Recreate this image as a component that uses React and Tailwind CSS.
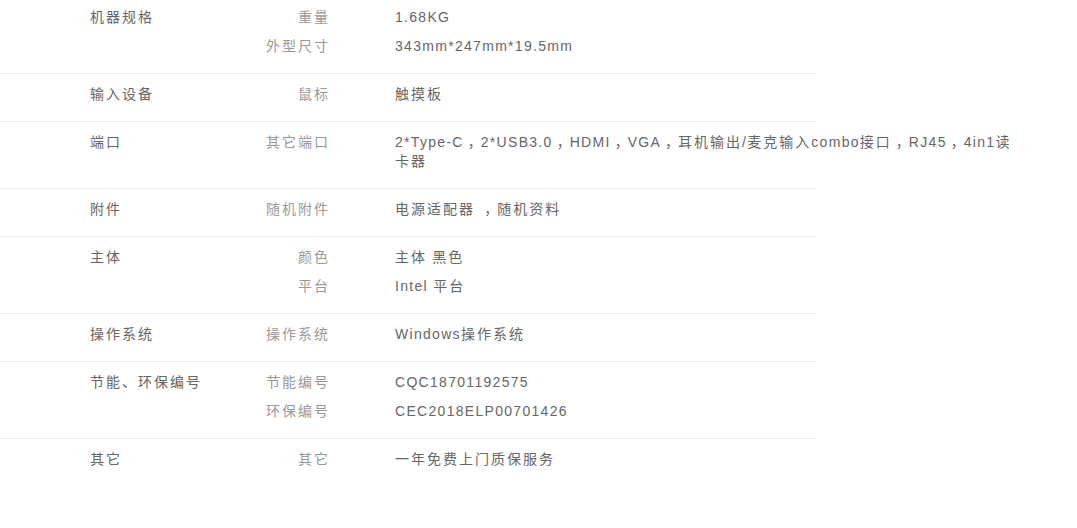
const data = [
  { title: "机器规格", items: [["重量", "1.68KG"], ["外型尺寸", "343mm*247mm*19.5mm"]] },
  { title: "输入设备", items: [["鼠标", "触摸板"]] },
  { title: "端口", items: [["其它端口", "2*Type-C，2*USB3.0，HDMI，VGA，耳机输出/麦克输入combo接口，RJ45，4in1读卡器"]] },
  { title: "附件", items: [["随机附件", "电源适配器 ，随机资料"]] },
  { title: "主体", items: [["颜色", "主体 黑色"], ["平台", "Intel 平台"]] },
  { title: "操作系统", items: [["操作系统", "Windows操作系统"]] },
  { title: "节能、环保编号", items: [["节能编号", "CQC18701192575"], ["环保编号", "CEC2018ELP00701426"]] },
  { title: "其它", items: [["其它", "一年免费上门质保服务"]] },
];

function T({ s }) {
  const parts = s.match(/[\u4e00-\u9fff、]+|，|[^\u4e00-\u9fff、，]+/g) || [];
  return parts.map((p, i) => {
    if (p === "，")
      return (
        <span key={i} className="ml-[4px] tracking-[-1px]">
          ，
        </span>
      );
    if (/[\u4e00-\u9fff、]/.test(p))
      return (
        <span key={i} className="tracking-[2px]">
          {p}
        </span>
      );
    return (
      <span key={i} className="tracking-[1.3px]">
        {p}
      </span>
    );
  });
}

export default function App() {
  return (
    <div className="w-[1077px] h-[528px] bg-white overflow-hidden text-[14px] font-['Liberation_Sans','Noto_Sans_CJK_SC',sans-serif]">
      <div className="w-[816px]">
        {data.map((row, i) => (
          <div
            key={i}
            className={`flex pb-[7px] ${i === 0 ? "pt-[8px]" : "pt-[11px]"} ${
              i < data.length - 1 ? "border-b border-[#eee]" : ""
            }`}
          >
            <div className="w-[90px] shrink-0" />
            <div className="w-[150px] shrink-0 leading-[19px] text-[#666]">
              <T s={row.title} />
            </div>
            <div className="flex flex-col">
              {row.items.map(([k, v], j) => (
                <div key={j} className="flex mb-[10px] leading-[19px]">
                  <div className="w-[90px] shrink-0 text-right text-[#999]">
                    <T s={k} />
                  </div>
                  <div className="w-[65px] shrink-0" />
                  <div className="w-[622px] shrink-0 text-[#666]">
                    <T s={v} />
                  </div>
                </div>
              ))}
            </div>
          </div>
        ))}
      </div>
    </div>
  );
}
